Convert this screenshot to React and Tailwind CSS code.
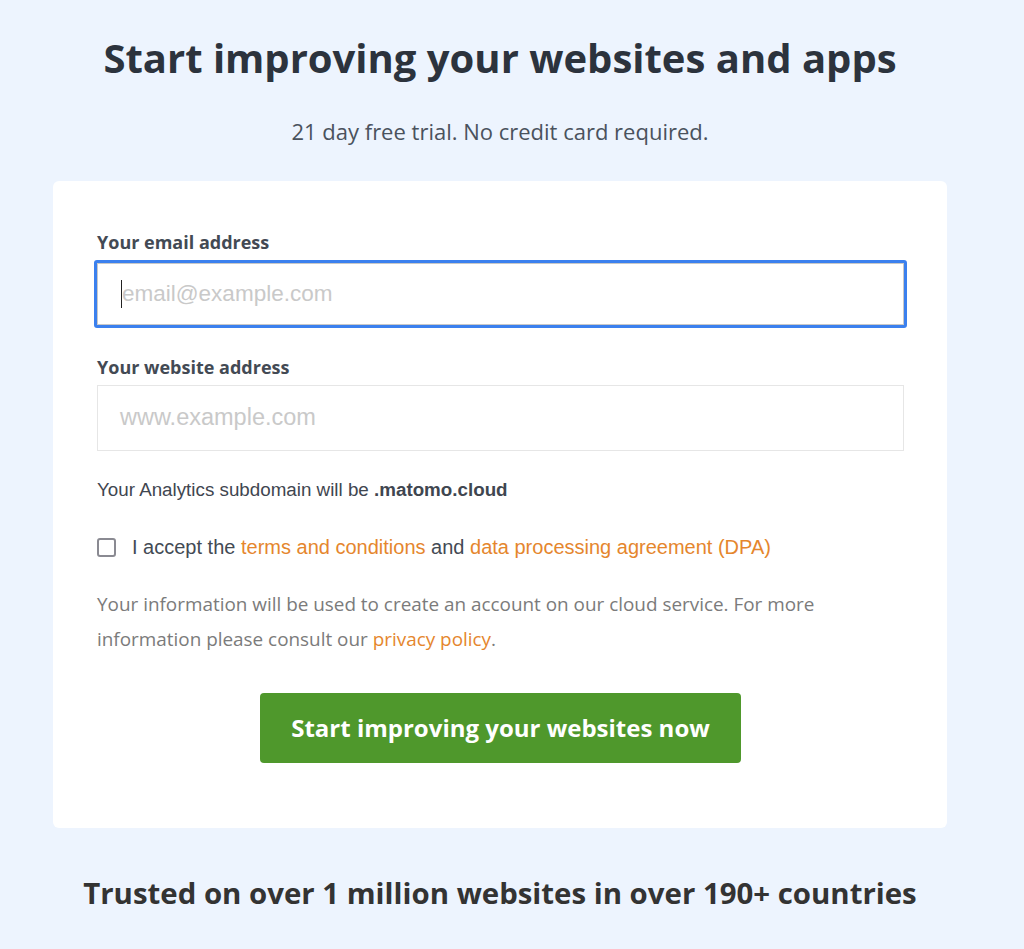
import React from 'react';

export default function App() {
  return (
    <div className="min-h-[949px] bg-[#edf4fe] font-['Open_Sans','Lato',sans-serif]">
      <div className="w-[1000px] pt-[30px]">
        {/* Header */}
        <h1 className="text-center text-[40px] leading-[56px] font-bold text-[#2c333d]">
          Start improving your websites and apps
        </h1>
        <p className="mt-[31px] text-center text-[22px] leading-[28px] text-[#4a525d]">
          21 day free trial. No credit card required.
        </p>

        {/* Signup card */}
        <div className="ml-[53px] w-[894px] mt-[36px] h-[647px] bg-white rounded-[6px] pl-[44px] pr-[43px] pt-[49px]">
          <label className="block text-[18px] leading-[24px] font-bold text-[#434a54]">
            Your email address
          </label>
          <div className="mt-[6px] -mx-[3px] rounded-[3px] border-[3px] border-[#3b80ee]">
            <div className="h-[62px] border border-[#c8c8c8] flex items-center pl-[23px]">
              <span className="w-px h-[28px] bg-[#222]"></span>
              <span className="text-[22.5px] text-[#c9c9c9] font-['Liberation_Sans',sans-serif]">email@example.com</span>
            </div>
          </div>

          <label className="block mt-[27px] text-[18px] leading-[24px] font-bold text-[#434a54]">
            Your website address
          </label>
          <div className="mt-[6px] h-[66px] border border-[#e6e6e6] flex items-center pl-[22px]">
            <span className="text-[23.5px] text-[#c9c9c9] font-['Liberation_Sans',sans-serif]">www.example.com</span>
          </div>

          <p className="mt-[27px] text-[18.8px] leading-[24px] text-[#3f4650] font-['Liberation_Sans',sans-serif]">
            Your Analytics subdomain will be <span className="font-bold">.matomo.cloud</span>
          </p>

          <div className="mt-[33px] flex items-center font-['Liberation_Sans',sans-serif]">
            <span className="w-[19px] h-[19px] rounded-[3px] border-2 border-[#8a8a92] bg-white"></span>
            <span className="ml-[16px] text-[20px] leading-[24px] text-[#434a54]">
              I accept the <span className="text-[#e5862d]">terms and conditions</span> and{' '}
              <span className="text-[#e5862d]">data processing agreement (DPA)</span>
            </span>
          </div>

          <p className="mt-[28px] text-[18.9px] leading-[35px] text-[#7b7b7b]">
            Your information will be used to create an account on our cloud service. For more information please
            consult our <span className="text-[#e5862d]">privacy policy</span>.
          </p>

          <div className="mt-[36px] flex justify-center">
            <button className="w-[481px] h-[70px] rounded-[4px] bg-[#4f982c] text-white text-[24px] font-bold">
              Start improving your websites now
            </button>
          </div>
        </div>

        <p className="mt-[45px] text-center text-[29.4px] leading-[40px] font-bold text-[#333333]">
          Trusted on over 1 million websites in over 190+ countries
        </p>
      </div>
    </div>
  );
}
